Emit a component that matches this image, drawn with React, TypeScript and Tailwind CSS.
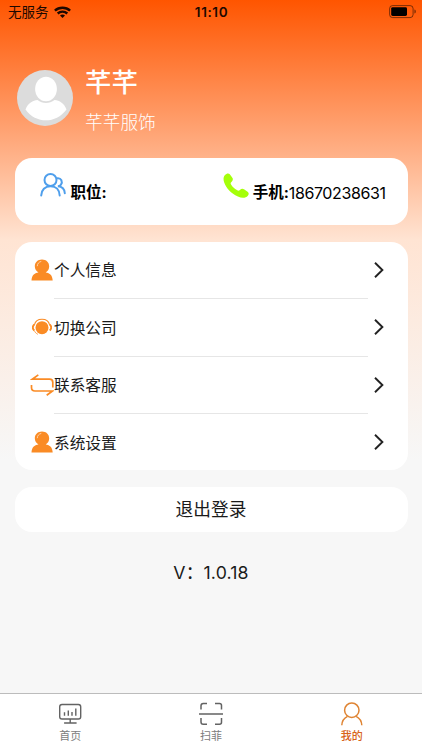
import React from 'react';

interface IconProps {
  className?: string;
}

const WifiIcon: React.FC<IconProps> = ({ className }) => (
  <svg className={className} viewBox="0 0 17 12" fill="none" stroke="#1c0800" strokeWidth="2.4">
    <path d="M.9 4.600C5 .7 12 .7 16.100 4.600" />
    <path d="M3.700 7.500c2.700-2.500 6.900-2.500 9.600 0" />
    <path d="M8.500 11.900 6 9.400c1.400-1.200 3.600-1.200 5 0z" fill="#1c0800" stroke="none" />
  </svg>
);

const BatteryIcon: React.FC<IconProps> = ({ className }) => (
  <svg className={className} viewBox="0 0 28 14">
    <rect x="0.6" y="0.6" width="23.500" height="12" rx="3" fill="none" stroke="#000" strokeOpacity="0.5" />
    <rect x="2.200" y="2.200" width="15.800" height="8.800" rx="1.400" fill="#000" />
    <path d="M25.400 4.600c2 .6 2 3.400 0 4z" fill="#000" fillOpacity="0.5" />
  </svg>
);

const Avatar: React.FC<IconProps> = ({ className }) => (
  <svg className={className} viewBox="0 0 56 56">
    <circle cx="28" cy="28" r="28" fill="#dcdcdc" />
    <ellipse cx="29" cy="19" rx="10.900" ry="12.200" fill="#fff" />
    <path d="M8.500 39.500C11 33 16 30.200 20.500 30c5 4 12 4 17 0 5 .4 10 3.500 12 9.500C44 47 36.500 50.300 29 50.300S13.500 47 8.500 39.500z" fill="#fff" />
  </svg>
);

const UsersIcon: React.FC<IconProps> = ({ className }) => (
  <svg className={className} viewBox="0 0 26 24" fill="none" stroke="#4f9fec" strokeWidth="2" strokeLinecap="round">
    <circle cx="10.500" cy="7" r="6" />
    <path d="M1.200 22.500C1.400 17 5 13.200 10.500 13.200s9 3.800 9.200 9.300" />
    <path d="M17.400 5.300c3.800-.4 5.700 3.600 3.400 6.500-.8 1-1.800 1.400-2.900 1.500 4.500.3 6.700 3.300 6.900 7" />
  </svg>
);

const PhoneIcon: React.FC<IconProps> = ({ className }) => (
  <svg className={className} viewBox="0 0 26 26" fill="#a5ff0a">
    <path d="M1.800 2.200C3.600.2 5.600-.1 6.800 1.200l2.700 3.900c.7 1.300.3 2.500-1.300 4.200-.8.900-.7 1.500 0 2.400 1.600 2.400 3.300 4.000 5.700 5.400 1.200.8 2.100.7 3-.1 1.400-1.400 2.700-1.600 4.100-.7l3.600 2.400c1.500 1 1.400 2.700.2 4.100-2.100 2.500-6 2.700-9.900.7C7.800 20.500 3.500 15.700 1.200 9.600.200 6.800.3 4.100 1.800 2.200z" />
  </svg>
);

const PersonIcon: React.FC<IconProps> = ({ className }) => (
  <svg className={className} viewBox="0 0 22 22">
    <path d="M11 .5c4.200 0 7.200 2.900 7.200 6.800 0 2.600-1.300 5-3.500 6.200 4.300.5 6.700 2.900 7 8H.500c.3-5.100 2.700-7.500 7-8C5.300 12.300 3.800 9.900 3.800 7.300 3.800 3.400 6.800.5 11 .5z" fill="#fa8b25" />
    <path d="M6.300 6.800c.2-2.300 1.500-3.800 3.600-4.300" fill="none" stroke="#ffd2a6" strokeWidth="1" strokeLinecap="round" />
  </svg>
);

const HeadsetIcon: React.FC<IconProps> = ({ className }) => (
  <svg className={className} viewBox="0 0 20 18">
    <circle cx="10" cy="9.700" r="6.500" fill="#fa8b25" />
    <g fill="none" stroke="#fa8b25">
      <path d="M2.400 6.800C4.200-.6 15.800-.6 17.600 6.800" strokeWidth="1.100" />
      <path d="M2.300 6.500C.3 8.100.3 10.900 2.300 12.500M17.700 6.500c2 1.600 2 4.400 0 6" strokeWidth="1.900" />
      <path d="M2.300 12.500c.7 1.900 1.900 3.100 3.600 3.800" strokeWidth="0.800" />
    </g>
  </svg>
);

const SwapIcon: React.FC<IconProps> = ({ className }) => (
  <svg className={className} viewBox="0 0 24 22" fill="none" stroke="#fa8b25" strokeWidth="1.700">
    <path d="M8.300.900 2.300 5.200H19.500c2.200 0 3.300 1.100 3.300 3.300v5" />
    <path d="M1.500 11v2.500c0 2.300 1.200 3.500 3.500 3.500h17.500l-5.800 4.300" />
  </svg>
);

const ChevronIcon: React.FC<IconProps> = ({ className }) => (
  <svg className={className} viewBox="0 0 10 16" fill="none" stroke="#222" strokeWidth="1.900">
    <path d="m1 .8 7.400 7.200L1 15.200" />
  </svg>
);

const MonitorIcon: React.FC<IconProps> = ({ className }) => (
  <svg className={className} viewBox="0 0 24 22" fill="none" stroke="#636363" strokeWidth="1.400">
    <rect x="1.700" y="1.500" width="21" height="14.500" rx="2.300" />
    <path d="M12.200 16V19.500M6.100 20h12.500M6.500 9.200v3.600M10.300 7.500v5.300M14 8.900v3.900M17.800 5.500v7.300" />
  </svg>
);

const ScanIcon: React.FC<IconProps> = ({ className }) => (
  <svg className={className} viewBox="0 0 24 24" fill="none" stroke="#636363" strokeWidth="1.500">
    <path d="M2 7.500V3.800C2 2.300 2.800 1.500 4.300 1.500H8M16 1.500h4.500c1.300 0 2 .7 2 2v4M2 16v4c0 1.500.8 2.300 2.300 2.300H8M16 22.300h4.500c1.300 0 2-.7 2-2V16M0 12h24" />
  </svg>
);

const MineIcon: React.FC<IconProps> = ({ className }) => (
  <svg className={className} viewBox="0 0 22 24" fill="none" stroke="#df8433" strokeWidth="1.500">
    <circle cx="10.800" cy="8.200" r="7.200" />
    <path d="M.8 23.300c.2-4.200 2.400-7.300 5.700-8.900M20.800 23.300c-.2-4.200-2.400-7.300-5.700-8.900" />
  </svg>
);

const menuItems = [
  { label: '个人信息', icon: <PersonIcon className="h-[22px] w-[22px]" /> },
  { label: '切换公司', icon: <HeadsetIcon className="h-[18px] w-5" /> },
  { label: '联系客服', icon: <SwapIcon className="h-[22px] w-6" /> },
  { label: '系统设置', icon: <PersonIcon className="h-[22px] w-[22px]" /> },
];

const tabs = [
  { label: '首页', icon: <MonitorIcon className="h-[22px] w-6" />, active: false },
  { label: '扫菲', icon: <ScanIcon className="h-6 w-6" />, active: false },
  { label: '我的', icon: <MineIcon className="h-6 w-[22px]" />, active: true },
];

const App: React.FC = () => {
  return (
    <div className="flex h-[750px] w-[422px] flex-col overflow-hidden bg-[linear-gradient(to_bottom,#ff5500_0px,#ffe4d3_240px,#f7f7f7_460px)] font-[Inter,'Noto_Sans_CJK_SC',sans-serif] text-[#1a1a1a]">
      <header className="grid h-6 shrink-0 grid-cols-3 items-center pl-2 text-[#1c0800]">
        <div className="flex items-center gap-[5px]">
          <span className="text-[13.500px] leading-6">无服务</span>
          <WifiIcon className="h-3 w-[17px]" />
        </div>
        <span className="pr-[7px] text-center text-[13.500px] leading-6 font-semibold tracking-[0.600px]">11:10</span>
        <BatteryIcon className="mr-[5px] mb-px h-[14px] w-7 justify-self-end" />
      </header>

      <section className="flex h-[133.500px] shrink-0 gap-3 pl-[17px] text-white">
        <Avatar className="mt-[46px] h-14 w-14" />
        <div className="pt-[40px]">
          <h1 className="text-[26.500px] leading-9 font-medium">芊芊</h1>
          <p className="mt-2 text-[17.700px] leading-[30px] font-light">芊芊服饰</p>
        </div>
      </section>

      <section className="mx-[14.500px] flex h-[67.500px] shrink-0 rounded-[17px] bg-white pt-[15px] leading-6 text-black">
        <div className="flex flex-1 pl-[25px]">
          <UsersIcon className="h-6 w-[26px]" />
          <span className="mt-2 ml-[5px] text-[15.500px] font-bold">职位:</span>
        </div>
        <div className="flex pr-[22px]">
          <PhoneIcon className="h-[26px] w-[26px]" />
          <span className="mt-2 ml-1 text-[15.500px] font-bold">手机:</span>
          <span className="mt-2 text-[16px] tracking-[-0.400px]">18670238631</span>
        </div>
      </section>

      <section className="mx-[14.500px] mt-[17px] h-[228px] shrink-0 rounded-[17px] bg-white">
        {menuItems.map((item, index) => (
          <div key={item.label} className="flex h-[57.300px] items-center pl-[15.500px]">
            <div className="flex w-6 justify-center pb-px">{item.icon}</div>
            <div
              className={
                index < menuItems.length - 1
                  ? 'flex h-full w-[314px] items-center border-b border-[#e6e6e6]'
                  : 'flex h-full w-[314px] items-center'
              }
            >
              <span className="pt-[2px] text-[15.700px]">{item.label}</span>
            </div>
            <ChevronIcon className="mb-px ml-[6px] h-4 w-[10px]" />
          </div>
        ))}
      </section>

      <button className="mx-[14.500px] mt-[17px] h-[45px] shrink-0 rounded-[17px] bg-white pt-[2px] text-[17.700px]">
        退出登录
      </button>

      <p className="mt-[27px] text-center text-[17.700px] leading-7 tracking-[0.150px]">V：1.0.18</p>

      <nav className="mt-auto grid h-[57px] shrink-0 grid-cols-3 border-t border-[#bcbcbc] bg-white">
        {tabs.map(tab => (
          <div
            key={tab.label}
            className={
              tab.active
                ? 'flex flex-col items-center pt-2 text-[11px] font-medium text-[#d8641a]'
                : 'flex flex-col items-center pt-2 text-[11px] text-[#7c7c7c]'
            }
          >
            <div className="flex h-6 items-center">{tab.icon}</div>
            <span className="mt-0.5 leading-4">{tab.label}</span>
          </div>
        ))}
      </nav>
    </div>
  );
};

export default App;
